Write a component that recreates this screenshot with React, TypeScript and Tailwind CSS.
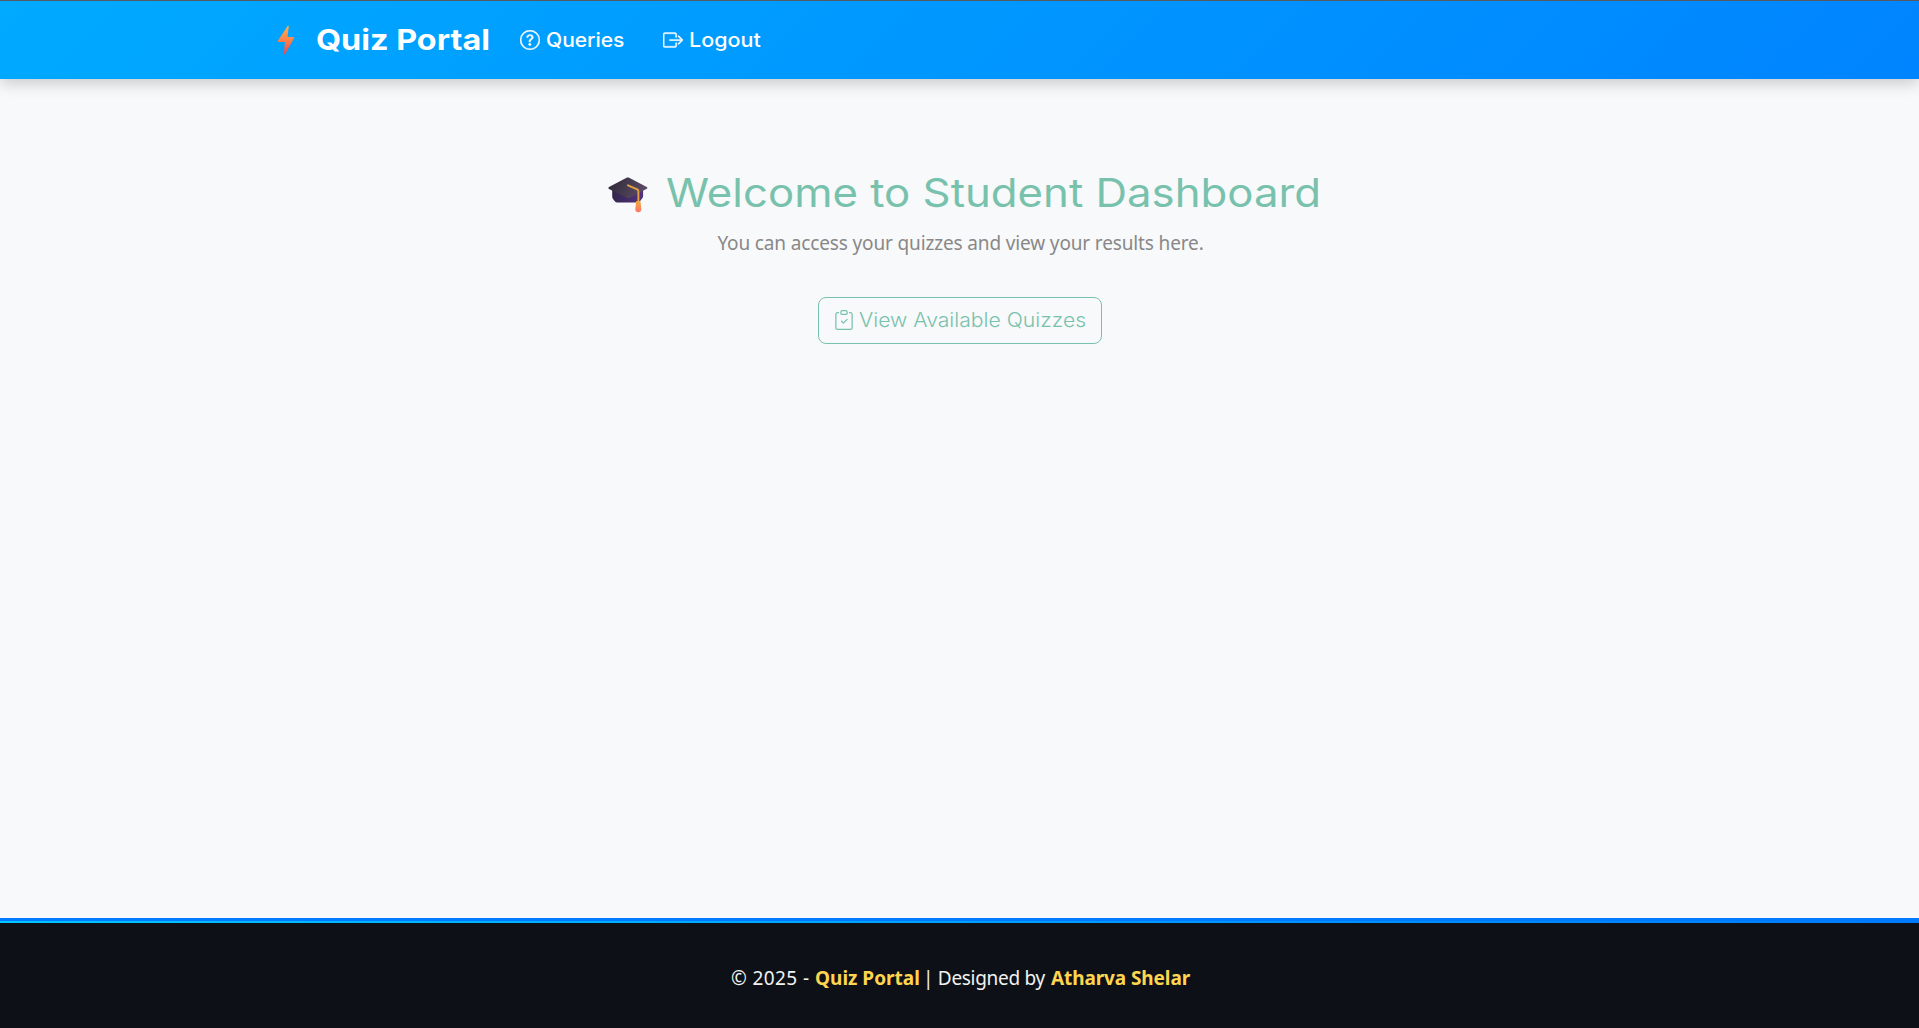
import { BsBoxArrowRight, BsClipboardCheck, BsQuestionCircle } from 'react-icons/bs';

function Bolt() {
  return (
    <svg className="h-[30px] w-[18px] shrink-0" viewBox="0 0 18 30" aria-hidden="true">
      <defs>
        <linearGradient id="bolt" x1="0" y1="0" x2="0" y2="1">
          <stop offset="0" stopColor="#fcb04a" />
          <stop offset="0.5" stopColor="#fb8349" />
          <stop offset="1" stopColor="#f5434f" />
        </linearGradient>
      </defs>
      <path
        d="M10.6 1.1c.4-.7 1.3-.4 1.2.4l-1.300 10.600h5.900c.7 0 .9.6.6 1.100L8.300 28.700c-.5.9-1.400.6-1.300-.3l.9-11.400H1.600c-.7 0-1-.6-.7-1.200z"
        fill="url(#bolt)"
      />
    </svg>
  );
}

function GraduationCap() {
  return (
    <svg className="mt-[4px] h-[36px] w-[40px] shrink-0" viewBox="0 0 40 36" aria-hidden="true">
      <defs>
        <linearGradient id="cap-base" x1="0" y1="0" x2="1" y2="0">
          <stop offset="0" stopColor="#33264c" />
          <stop offset="0.5" stopColor="#432c68" />
          <stop offset="1" stopColor="#573180" />
        </linearGradient>
        <linearGradient id="cap-top" x1="0" y1="0" x2="1" y2="0.3">
          <stop offset="0" stopColor="#2d2635" />
          <stop offset="1" stopColor="#594a65" />
        </linearGradient>
        <linearGradient id="tassel" x1="0" y1="0" x2="0" y2="1">
          <stop offset="0" stopColor="#eeaa3e" />
          <stop offset="1" stopColor="#ff7566" />
        </linearGradient>
      </defs>
      <path d="M4.200 12v7.500c0 1 .4 2 1 2.800l1.800 2.200c.6.700 1.300 1 2.100 1h20.500c.8 0 1.600-.4 2.200-1.100l2.500-3.200c.5-.6.8-1.300.8-2V12z" fill="url(#cap-base)" />
      <path d="M18.600.7c.8-.4 1.700-.4 2.500 0l17.700 9.200c.8.4.8 1.400 0 1.900L22.400 20.600c-1.300.7-2.600.7-3.900 0L1 11.900c-.8-.5-.8-1.400 0-1.900z" fill="url(#cap-top)" />
      <path d="M20 8.300l9.200 4.100c.8.4 1.200 1 1.200 1.900v11.500" fill="none" stroke="#e2a13e" strokeWidth="1.900" strokeLinecap="round" strokeLinejoin="round" />
      <path d="M28.900 24h2.700c.7 0 1 .5 1 1l.7 7.600c.1 1.500-1.200 2.700-3 2.700s-3.100-1.200-3-2.700l.7-7.600c0-.6.3-1 .9-1z" fill="url(#tassel)" />
    </svg>
  );
}

export default function App() {
  return (
    <div className="flex h-screen flex-col bg-[#f8f9fa] font-['Inter','Montserrat',sans-serif]">
      <header className="relative flex h-[79px] shrink-0 items-center border-t border-[#555b60] bg-[linear-gradient(135deg,#00aaff,#0084ff)] pl-[277px] text-white shadow-[0_4px_15px_rgba(0,0,0,0.2)]">
        <a className="flex items-center">
          <Bolt />
          <span className="ml-[21px] w-[174px] origin-left scale-x-[1.115] text-[29px] leading-[40px] font-bold whitespace-nowrap">
            Quiz Portal
          </span>
        </a>
        <nav className="ml-[30px] flex items-center text-[20px] leading-[30px] font-medium">
          <a className="flex w-[143px] items-center whitespace-nowrap">
            <BsQuestionCircle className="mb-px size-[20px] stroke-white stroke-[0.300]" />
            <span className="ml-[6px] origin-left scale-x-[1.050]">Queries</span>
          </a>
          <a className="flex items-center whitespace-nowrap">
            <BsBoxArrowRight className="mb-px size-[20px] stroke-white stroke-[0.300]" />
            <span className="ml-[6px] origin-left scale-x-[1.075]">Logout</span>
          </a>
        </nav>
      </header>

      <main className="flex grow flex-col items-center pt-[89px]">
        <h1 className="flex h-[50px] items-center pl-[4px] text-[39px] font-normal text-[#78c2ad]">
          <GraduationCap />
          <span className="ml-[18px] w-[650px] origin-left scale-x-[1.121] whitespace-nowrap">
            Welcome to Student Dashboard
          </span>
        </h1>
        <p className="mt-[10px] pl-[2px] font-['Noto_Sans','Segoe_UI',sans-serif] text-[19px] leading-[30px] tracking-[-0.140px] text-[#888888]">
          You can access your quizzes and view your results here.
        </p>
        <button className="mt-[39px] flex h-[47px] w-[284px] items-center rounded-lg border border-[#78c2ad] pl-[15px] text-[19.500px] whitespace-nowrap text-[#78c2ad]">
          <BsClipboardCheck className="mb-px size-[20px]" />
          <span className="ml-[5px] origin-left scale-x-[1.086] font-light">View Available Quizzes</span>
        </button>
      </main>

      <footer className="flex h-[110px] shrink-0 flex-col border-t-[3px] border-[#007bff] bg-[#0d1117] font-['Noto_Sans','Segoe_UI',sans-serif] text-[19px] text-[#f1f1f1]">
        <div className="h-[2px] bg-[linear-gradient(90deg,#00c6ff,#007bff)]" />
        <p className="flex grow items-center pt-[6px] pl-[731px] whitespace-nowrap">
          <span className="w-[84px] tracking-[0.400px]">© 2025 -</span>
          <strong className="w-[108px] font-bold text-[#ffd54f]">Quiz Portal</strong>
          <span className="w-[128px] tracking-[-0.300px]">| Designed by</span>
          <strong className="font-bold tracking-[-0.100px] text-[#ffd54f]">Atharva Shelar</strong>
        </p>
      </footer>
    </div>
  );
}
